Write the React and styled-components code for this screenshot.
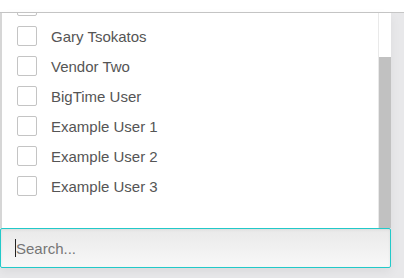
import { useLayoutEffect, useRef } from 'react';
import styled, { createGlobalStyle } from 'styled-components';

const GlobalStyle = createGlobalStyle`
  html, body {
    margin: 0;
    padding: 0;
    background: #e8e8ea;
    font-family: 'Liberation Sans', Arial, sans-serif;
  }
`;

const users = [
  'Admin User',
  'Vendor One',
  'Gary Tsokatos',
  'Vendor Two',
  'BigTime User',
  'Example User 1',
  'Example User 2',
  'Example User 3',
];

const Page = styled.div`
  width: 404px;
  height: 278px;
  overflow: hidden;
  display: flex;
  flex-direction: column;
`;

const TopStrip = styled.div`
  height: 12px;
  background: #fff;
  border-bottom: 1px solid #c6c6c6;
`;

const Dropdown = styled.div`
  width: 391px;
  display: flex;
  flex-direction: column;
  box-shadow: 0 4px 10px rgba(0, 0, 0, 0.06);
`;

const ListArea = styled.div`
  display: flex;
  height: 215px;
  border-left: 2px solid #d6d6d6;
  background: #fff;
`;

const Viewport = styled.div`
  flex: 1;
  overflow: hidden;
`;

const List = styled.ul`
  list-style: none;
  margin: 0;
  padding: 3px 0 27px;
`;

const Item = styled.li`
  height: 30px;
  display: flex;
  align-items: center;
  gap: 14px;
  padding-left: 15px;
  font-size: 15px;
  color: #555;
`;

const Box = styled.span`
  width: 20px;
  height: 20px;
  box-sizing: border-box;
  border: 1px solid #c4c4c4;
  border-radius: 2px;
  background: #fff;
`;

const Track = styled.div`
  width: 12px;
  display: flex;
  flex-direction: column;
  border-left: 1px solid #e9e9e9;
  background: #fff;
`;

const Thumb = styled.div`
  margin-top: ${(p) => p.$offset}px;
  height: ${(p) => p.$size}px;
  background: #c1c1c1;
`;

const SearchWrap = styled.div`
  position: relative;
  height: 40px;
`;

const SearchInput = styled.input`
  width: 100%;
  height: 100%;
  box-sizing: border-box;
  border: 1px solid #22c9c9;
  border-radius: 2px;
  padding: 0 0 0 15px;
  outline: none;
  font-family: inherit;
  font-size: 15px;
  color: #333;
  background: linear-gradient(#e9e9e9, #f8f8f8);
  box-shadow: inset 0 1px 3px rgba(0, 0, 0, 0.06);

  &::placeholder {
    color: #767676;
  }
`;

const Caret = styled.span`
  position: absolute;
  left: 15px;
  top: 11px;
  width: 1px;
  height: 18px;
  background: #222;
`;

function App() {
  const viewRef = useRef(null);

  useLayoutEffect(() => {
    const el = viewRef.current;
    if (el) el.scrollTop = el.scrollHeight;
  }, []);

  return (
    <>
      <GlobalStyle />
      <Page>
        <TopStrip />
        <Dropdown>
          <ListArea>
            <Viewport ref={viewRef}>
              <List>
                {users.map((name) => (
                  <Item key={name}>
                    <Box />
                    {name}
                  </Item>
                ))}
              </List>
            </Viewport>
            <Track>
              <Thumb $offset={44} $size={171} />
            </Track>
          </ListArea>
          <SearchWrap>
            <SearchInput placeholder="Search..." />
            <Caret />
          </SearchWrap>
        </Dropdown>
      </Page>
    </>
  );
}

export default App;
